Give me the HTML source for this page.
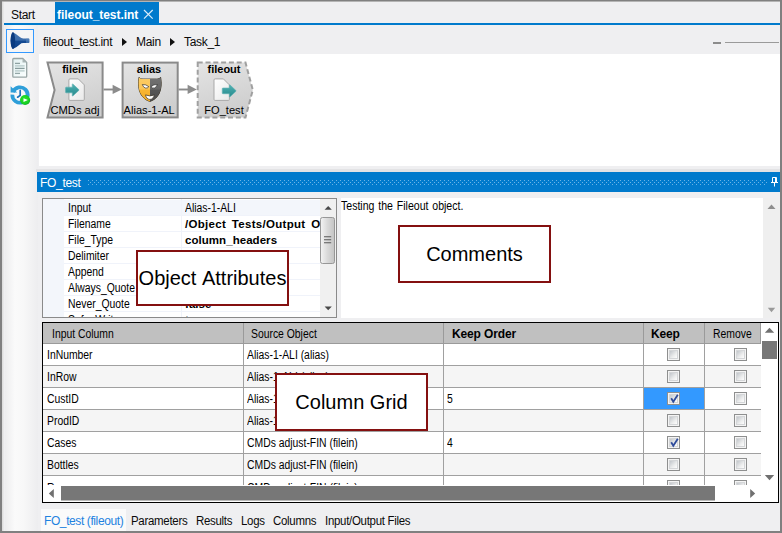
<!DOCTYPE html>
<html>
<head>
<meta charset="utf-8">
<title>fileout_test.int</title>
<style>
*{box-sizing:border-box;margin:0;padding:0}
html,body{width:782px;height:533px;overflow:hidden;background:#efeff1}
body{position:relative;font-family:"Liberation Sans",sans-serif;font-size:12px;color:#1a1a1a}
.abs{position:absolute}
.t{position:absolute;white-space:nowrap;line-height:1}
.ui{font-size:12px;letter-spacing:-0.3px;color:#0a0a0a}
.ms{font-size:12px;transform:scaleX(.865);transform-origin:0 0;color:#000}
.msb{font-size:11.5px;letter-spacing:0.05px;word-spacing:4px;color:#000;font-weight:bold}
#frame-top{left:0;top:0;width:782px;height:2px;background:linear-gradient(#808080 0,#808080 1px,#b4b4b4 1px,#b4b4b4 2px)}
#frame-left{left:0;top:0;width:2px;height:533px;background:#808080}
#frame-left2{left:2px;top:2px;width:2px;height:529px;background:linear-gradient(90deg,#d9d9d9,#ececec)}
#frame-right{left:780px;top:0;width:2px;height:533px;background:#808080}
#frame-bottom{left:0;top:531px;width:782px;height:2px;background:#808080}
#tabline{left:4px;top:23px;width:776px;height:2px;background:#007acc}
#tab-active{left:55px;top:2px;width:104px;height:22px;background:#007acc}
#canvas{left:39px;top:54px;width:741px;height:112px;background:#fff}
#strip{left:36px;top:169px;width:744px;height:3px;background:#e3e3e5}
#ptitle{left:37px;top:172px;width:743px;height:20px;background:#007acc}
#dots{left:88px;top:179px}
#props{left:42px;top:198px;width:295px;height:120px;background:#fff;border:1px solid #8a8a8a;overflow:hidden}
#comments{left:341px;top:198px;width:422px;height:120px;background:#fff}
#cscroll{left:763px;top:198px;width:17px;height:120px;background:#efefef}
#grid{left:42px;top:322px;width:737px;height:181px;background:#fff;border:1px solid #000;overflow:hidden}
.callout{position:absolute;border:2px solid #841010;background:#fff;font-size:20px;color:#000;text-align:center;white-space:nowrap;font-kerning:none}
.pr{position:absolute;left:21px;width:256px;height:16px;border-bottom:1px solid #f0f3fa}
.pr .t{top:2px}
.pr .msb{top:2.6px}
.gh{position:absolute;top:0;height:21px;background:#c0c0c0;border-right:1px solid #9a9a9a;border-bottom:1px solid #9a9a9a}
.gh .t{top:5px;word-spacing:0}
.gh .msb{font-size:12px;letter-spacing:-0.13px;word-spacing:0;top:5px}
.gr{position:absolute;left:0;width:718px;height:22px;border-bottom:1px solid #a0a0a0;background:#fff}
.gr.alt{background:#f5f5f5}
.gc{position:absolute;top:0;height:21px;border-right:1px solid #a0a0a0}
.gc .t{top:5px;left:4px}
.gr.last .gc .t{top:5.7px}
.cb{position:absolute;top:4px;width:13px;height:13px;border:1px solid #8e8f8f;background:#f4f4f4}
.cb i{position:absolute;left:1px;top:1px;width:9px;height:9px;border:1px solid #d4d6d8;background:linear-gradient(135deg,#c2c6cb,#eceded 60%,#fdfdfd)}
.cb svg{position:absolute;left:1px;top:0px}
</style>
</head>
<body>
<!-- tab strip -->
<div class="abs" id="tab-active"></div>
<div class="abs" id="tabline"></div>
<div class="t ui" id="tstart" style="left:11px;top:9px">Start</div>
<div class="t" id="tfile" style="left:57px;top:9px;font-size:12px;font-weight:bold;color:#fff;letter-spacing:-0.05px">fileout_test.int</div>
<svg class="abs" style="left:143px;top:9px" width="11" height="11" viewBox="0 0 11 11"><path d="M1 1 L9.700 9.700 M9.700 1 L1 9.700" stroke="#d9ecfa" stroke-width="1.200" fill="none"/></svg>

<!-- left toolbar -->
<div class="abs" id="tbcol" style="left:5px;top:25px;width:33px;height:506px;background:linear-gradient(90deg,#ededee 0,#fafafa 30%,#f8f8f8 55%,#ededef 100%)"></div>
<div class="abs" id="btn1" style="left:6px;top:29px;width:28px;height:24px;border:1px solid #3399ff;background:#f5f5f6"></div>
<svg class="abs" style="left:4px;top:26px" width="36" height="84" viewBox="4 26 36 84">
  <defs>
    <linearGradient id="hg" x1="0" y1="0" x2="0" y2="1"><stop offset="0" stop-color="#4877b3"/><stop offset="0.480" stop-color="#3b6cab"/><stop offset="0.520" stop-color="#154b93"/><stop offset="1" stop-color="#0f4189"/></linearGradient>
    <linearGradient id="pg" x1="0" y1="0" x2="1" y2="1"><stop offset="0" stop-color="#e3f1f1"/><stop offset="1" stop-color="#fbffff"/></linearGradient>
    <radialGradient id="gg" cx="0.450" cy="0.400" r="0.650"><stop offset="0" stop-color="#2be52b"/><stop offset="0.700" stop-color="#16d022"/><stop offset="1" stop-color="#0c9a2c"/></radialGradient>
  </defs>
  <!-- horn -->
  <path d="M12.800 32.300 Q16.800 34.200 19.800 37 Q21.200 38.400 23.200 38.400 L28.600 38.400 Q29.300 38.400 29.300 39.100 V42.300 Q29.300 43 28.600 43 L23.200 43 Q21.200 43 19.800 44.400 Q16.800 47.200 12.800 48.900 Q10.600 46 10.600 40.600 Q10.600 35.200 12.800 32.300 Z" fill="url(#hg)"/>
  <rect x="26" y="38.400" width="3.300" height="4.600" rx="0.700" fill="#5a88bf" opacity="0.550"/>
  <ellipse cx="12.900" cy="40.600" rx="2.300" ry="8.300" fill="#0b3b80"/>
  <!-- document -->
  <path d="M13.600 58.500 H22.800 L26.700 62.400 V76.300 Q26.700 77.200 25.800 77.200 H13.600 Q12.800 77.200 12.800 76.300 V59.400 Q12.800 58.500 13.600 58.500 Z" fill="url(#pg)" stroke="#98a5a5" stroke-width="1.300"/>
  <path d="M22.500 58.700 V62.600 H26.500 Z" fill="#aab6b6"/>
  <path d="M15 63.400 H20" stroke="#8ea2a2" stroke-width="1.300"/>
  <path d="M15 65.900 H24.600" stroke="#b4c8c8" stroke-width="1.300"/>
  <path d="M15 68.400 H24.600" stroke="#879c9c" stroke-width="1.300"/>
  <path d="M15 70.900 H24.600" stroke="#b4c8c8" stroke-width="1.300"/>
  <path d="M15 73.400 H20" stroke="#93a7a7" stroke-width="1.300"/>
  <!-- history / run -->
  <path d="M12.910 92 A7.700 7.700 0 1 1 12.320 94.600" fill="none" stroke="#2f9fd9" stroke-width="3.700"/>
  <path d="M10.600 86.200 L10.600 92.600 L17.200 92.600 Z" fill="#2f9fd9"/>
  <path d="M20.200 90.400 V95.400 L17.600 97.200" fill="none" stroke="#1b72ba" stroke-width="1.700" stroke-linecap="round" stroke-linejoin="round"/>
  <circle cx="25.100" cy="100" r="5.100" fill="url(#gg)"/>
  <path d="M23.500 98.200 L27.900 100.050 L23.500 101.900 Z" fill="#fff"/>
</svg>

<!-- breadcrumb -->
<div class="t ui" id="bc1" style="left:43px;top:36px">fileout_test.int</div>
<div class="abs" style="left:122px;top:38px;width:0;height:0;border-left:5px solid #111;border-top:4px solid transparent;border-bottom:4px solid transparent"></div>
<div class="t ui" id="bc2" style="left:136px;top:36px">Main</div>
<div class="abs" style="left:170px;top:38px;width:0;height:0;border-left:5px solid #111;border-top:4px solid transparent;border-bottom:4px solid transparent"></div>
<div class="t ui" id="bc3" style="left:184px;top:36px">Task_1</div>
<div class="abs" style="left:713px;top:42px;width:8px;height:2px;background:#8c8c8c"></div>
<div class="abs" style="left:725px;top:42px;width:54px;height:1px;background:#9a9a9a"></div>

<!-- canvas -->
<div class="abs" id="canvas"></div>
<div class="abs" id="strip"></div>
<svg class="abs" id="flow" style="left:39px;top:54px" width="240" height="70" viewBox="39 54 240 70">
  <defs>
    <linearGradient id="ng" x1="0" y1="0" x2="0.300" y2="1"><stop offset="0" stop-color="#e4e4e4"/><stop offset="1" stop-color="#cecece"/></linearGradient>
    <linearGradient id="ag" x1="0" y1="0" x2="0" y2="1"><stop offset="0" stop-color="#56b3b4"/><stop offset="0.500" stop-color="#3a9d9f"/><stop offset="1" stop-color="#2a8c8e"/></linearGradient>
    <linearGradient id="dg" x1="0" y1="0" x2="1" y2="1"><stop offset="0" stop-color="#ffffff"/><stop offset="1" stop-color="#e9e9e9"/></linearGradient>
  </defs>
  <path d="M47.500 62.600 H102.600 V117.400 H47.500 L54.600 89.900 Z" fill="url(#ng)" stroke="#8a8a8a" stroke-width="2" stroke-linejoin="miter"/>
  <rect x="122.600" y="62.600" width="55.100" height="54.800" fill="url(#ng)" stroke="#8a8a8a" stroke-width="2"/>
  <path d="M197.700 62.600 H245.500 L252.800 90 L245.500 117.400 H197.700 Z" fill="url(#ng)" stroke="#a0a0a0" stroke-width="2" stroke-dasharray="5 2.800"/>
  <path d="M103.500 89.500 H113.500" stroke="#8a8a8a" stroke-width="1.900"/>
  <path d="M112.600 84.700 L121.800 89.400 L112.600 94.100 Z" fill="#8c8c8c"/>
  <path d="M178.500 89.500 H188.500" stroke="#8a8a8a" stroke-width="1.900"/>
  <path d="M187.600 84.700 L196.800 89.400 L187.600 94.100 Z" fill="#8c8c8c"/>
  <!-- filein icon -->
  <path d="M70 78.900 H78.300 L84.300 84.900 V99.400 Q84.300 100.400 83.300 100.400 H70 Q68.900 100.400 68.900 99.400 V80 Q68.900 78.900 70 78.900 Z" fill="url(#dg)" stroke="#a9a9a9" stroke-width="1"/>
  <path d="M65.600 87.800 Q65.600 87.200 66.200 87.200 H72.300 V84.400 Q72.300 83.600 73 84.200 L78.800 89.600 Q79.200 90 78.800 90.400 L73 95.800 Q72.300 96.400 72.300 95.600 V92.800 H66.200 Q65.600 92.800 65.600 92.200 Z" fill="url(#ag)" stroke="#5fb0b2" stroke-width="0.700"/>
  <!-- alias mask -->
  <defs>
    <linearGradient id="mgold" x1="0" y1="0" x2="0" y2="1"><stop offset="0" stop-color="#fccb63"/><stop offset="0.480" stop-color="#fbc557"/><stop offset="0.540" stop-color="#f8b530"/><stop offset="1" stop-color="#f2ab25"/></linearGradient>
    <linearGradient id="mgray" x1="0" y1="0" x2="0" y2="1"><stop offset="0" stop-color="#737373"/><stop offset="0.480" stop-color="#666666"/><stop offset="0.540" stop-color="#555555"/><stop offset="1" stop-color="#4c4c4c"/></linearGradient>
    <clipPath id="mL"><rect x="137" y="76" width="12.900" height="27"/></clipPath>
    <clipPath id="mR"><rect x="149.900" y="76" width="13" height="27"/></clipPath>
  </defs>
  <path id="maskp" d="M139.100 77.300 C139.800 78.500 141 79.100 143 79.100 L156.700 79.100 C158.700 79.100 159.900 78.500 160.600 77.300 C161.700 83 161.300 89.600 158.900 94 C156.800 97.800 153.600 100.400 149.850 101.400 C146.100 100.400 142.900 97.800 140.800 94 C138.400 89.600 138 83 139.100 77.300 Z" fill="#3c3424" stroke="#3c3424" stroke-width="1"/>
  <path d="M139.100 77.300 C139.800 78.500 141 79.100 143 79.100 L156.700 79.100 C158.700 79.100 159.900 78.500 160.600 77.300 C161.700 83 161.300 89.600 158.900 94 C156.800 97.800 153.600 100.400 149.850 101.400 C146.100 100.400 142.900 97.800 140.800 94 C138.400 89.600 138 83 139.100 77.300 Z" fill="url(#mgold)" clip-path="url(#mL)"/>
  <path d="M139.100 77.300 C139.800 78.500 141 79.100 143 79.100 L156.700 79.100 C158.700 79.100 159.900 78.500 160.600 77.300 C161.700 83 161.300 89.600 158.900 94 C156.800 97.800 153.600 100.400 149.850 101.400 C146.100 100.400 142.900 97.800 140.800 94 C138.400 89.600 138 83 139.100 77.300 Z" fill="url(#mgray)" clip-path="url(#mR)"/>
  <path d="M142.300 84.500 Q146 84.200 148.800 86.700 Q147.400 88.600 145.200 88 Q143.200 87.200 142.300 84.500 Z" fill="#fff" stroke="#3a3226" stroke-width="0.700"/>
  <path d="M157.400 84.500 Q153.700 84.200 150.900 86.700 Q152.300 88.600 154.500 88 Q156.500 87.200 157.400 84.500 Z" fill="#fff" stroke="#2e2e2e" stroke-width="0.700"/>
  <path d="M145.500 94.900 Q149.900 97 154.300 94.900 Q153.400 99.200 149.900 99.400 Q146.400 99.200 145.500 94.900 Z" fill="#fff" stroke="#3a3226" stroke-width="0.700"/>
  <!-- fileout icon -->
  <path d="M215.100 78.900 H223.400 L229.400 84.900 V99.400 Q229.400 100.400 228.400 100.400 H215.100 Q214 100.400 214 99.400 V80 Q214 78.900 215.100 78.900 Z" fill="url(#dg)" stroke="#a9a9a9" stroke-width="1"/>
  <path d="M222.300 88.700 Q222.300 88.100 222.900 88.100 H229.400 V85.300 Q229.400 84.500 230.100 85.100 L235.900 90.500 Q236.300 90.900 235.900 91.300 L230.100 96.700 Q229.400 97.300 229.400 96.500 V93.700 H222.900 Q222.300 93.700 222.300 93.100 Z" fill="url(#ag)" stroke="#5fb0b2" stroke-width="0.700"/>
  <g font-family="Liberation Sans, sans-serif" font-size="11" fill="#000" text-anchor="middle">
    <text x="75" y="73" font-weight="bold">filein</text>
    <text x="75" y="114" font-size="11.200">CMDs adj</text>
    <text x="149" y="73" font-weight="bold">alias</text>
    <text x="149.200" y="114" font-size="11.100">Alias-1-AL</text>
    <text x="224" y="73" font-weight="bold">fileout</text>
    <text x="224" y="114" font-size="11.100">FO_test</text>
  </g>
</svg>

<!-- panel title -->
<div class="abs" id="ptitle"></div>
<div class="t ui" id="pt" style="left:40px;top:177px;color:#fff">FO_test</div>
<svg class="abs" id="dots" width="680" height="6">
  <defs><pattern id="dp" width="4" height="4" patternUnits="userSpaceOnUse"><rect x="0" y="1" width="1" height="1" fill="#6ab4e6"/><rect x="2" y="3" width="1" height="1" fill="#6ab4e6"/></pattern></defs>
  <rect x="0" y="0" width="680" height="6" fill="url(#dp)"/>
</svg>
<svg class="abs" style="left:770px;top:176px" width="10" height="11" viewBox="0 0 10 11"><path d="M2.500 1.500 H6.500 V6.500 H2.500 Z M5.500 1.500 V6.500 M1 6.500 H8 M4.500 6.500 V10.500" stroke="#fff" stroke-width="1" fill="none"/></svg>

<!-- comments -->
<div class="abs" id="comments"></div>
<div class="abs" id="cscroll"></div>
<svg class="abs" style="left:763px;top:198px" width="16" height="120" viewBox="0 0 16 120"><path d="M4.500 11 L8.500 6.500 L12.500 11 Z" fill="#8e8e8e"/><path d="M4.800 109.800 L8.500 114.200 L12.200 109.800 Z" fill="#999"/></svg>
<div class="t ms" id="ctext" style="left:341px;top:200px;transform:scaleX(.88);word-spacing:1px">Testing the Fileout object.</div>
<div class="abs" id="props">
<div class="abs" style="left:0;top:0;width:21px;height:118px;background:#f3f6fb"></div>
<div class="pr" style="top:1px;background:#f3f6fb"><div class="t ms" style="left:4px">Input</div><div class="t ms" style="left:121px">Alias-1-ALI</div></div>
<div class="pr" style="top:17px"><div class="t ms" style="left:4px">Filename</div><div class="t msb" style="left:121px;letter-spacing:0.3px;word-spacing:2.2px">/Object Tests/Output O</div></div>
<div class="pr" style="top:33px"><div class="t ms" style="left:4px">File_Type</div><div class="t msb" style="left:121px">column_headers</div></div>
<div class="pr" style="top:49px"><div class="t ms" style="left:4px">Delimiter</div><div class="t msb" style="left:121px">,</div></div>
<div class="pr" style="top:65px"><div class="t ms" style="left:4px">Append</div><div class="t ms" style="left:121px">false</div></div>
<div class="pr" style="top:81px"><div class="t ms" style="left:4px">Always_Quote</div><div class="t ms" style="left:121px">false</div></div>
<div class="pr" style="top:97px"><div class="t ms" style="left:4px">Never_Quote</div><div class="t msb" style="left:121px">false</div></div>
<div class="pr" style="top:113px"><div class="t ms" style="left:4px">Safe_Write</div><div class="t msb" style="left:121px">true</div></div>
<div class="abs" style="left:138px;top:0;width:1px;height:118px;background:#f0f3fa"></div>
<div class="abs" style="left:277px;top:0;width:17px;height:118px;background:#f0f0f0"></div>
<svg class="abs" style="left:277px;top:0" width="17" height="118" viewBox="0 0 17 118"><defs><linearGradient id="thg" x1="0" y1="0" x2="1" y2="0"><stop offset="0" stop-color="#f4f4f4"/><stop offset="0.5" stop-color="#d9d9d9"/><stop offset="1" stop-color="#c4c4c4"/></linearGradient></defs><path d="M4.600 10.800 L8.200 7 L11.800 10.800 Z" fill="#484848"/><rect x="0.500" y="18.500" width="14" height="46" rx="2" fill="url(#thg)" stroke="#979797"/><path d="M4 37.800 H11.200 M4 40.800 H11.200 M4 43.800 H11.200" stroke="#5a5a5a" stroke-width="1.100"/><path d="M4.600 107.500 L8.200 111.300 L11.800 107.500 Z" fill="#484848"/></svg>
</div>
<div class="abs" id="grid">
<div class="gh" style="left:0px;width:201px"><div class="t ms" style="left:9px">Input Column</div></div>
<div class="gh" style="left:201px;width:200px"><div class="t ms" style="left:7px">Source Object</div></div>
<div class="gh" style="left:401px;width:200px"><div class="t msb" style="left:8px">Keep Order</div></div>
<div class="gh" style="left:601px;width:61px"><div class="t msb" style="left:7px">Keep</div></div>
<div class="gh" style="left:662px;width:56px"><div class="t ms" style="left:7.5px">Remove</div></div>
<div class="gr" style="top:21px">
<div class="gc" style="left:0;width:201px"><div class="t ms">InNumber</div></div>
<div class="gc" style="left:201px;width:200px"><div class="t ms" style="left:2.5px">Alias-1-ALI (alias)</div></div>
<div class="gc" style="left:401px;width:200px"><div class="t ms" style="left:3px"></div></div>
<div class="gc" style="left:601px;width:61px"><div class="cb" style="left:23px"><i></i></div></div>
<div class="gc" style="left:662px;width:56px;border-right:none"><div class="cb" style="left:29px"><i></i></div></div>
</div>
<div class="gr alt" style="top:43px">
<div class="gc" style="left:0;width:201px"><div class="t ms">InRow</div></div>
<div class="gc" style="left:201px;width:200px"><div class="t ms" style="left:2.5px">Alias-1-ALI (alias)</div></div>
<div class="gc" style="left:401px;width:200px"><div class="t ms" style="left:3px"></div></div>
<div class="gc" style="left:601px;width:61px"><div class="cb" style="left:23px"><i></i></div></div>
<div class="gc" style="left:662px;width:56px;border-right:none"><div class="cb" style="left:29px"><i></i></div></div>
</div>
<div class="gr" style="top:65px">
<div class="gc" style="left:0;width:201px"><div class="t ms">CustID</div></div>
<div class="gc" style="left:201px;width:200px"><div class="t ms" style="left:2.5px">Alias-1-ALI (alias)</div></div>
<div class="gc" style="left:401px;width:200px"><div class="t ms" style="left:3px">5</div></div>
<div class="gc" style="left:601px;width:61px;background:#3399ff"><div class="cb" style="left:23px"><i></i><svg width="11" height="11" viewBox="0 0 11 11"><path d="M2.200 5.200 L4.300 8.800 L8.800 1.800" stroke="#2f4c9c" stroke-width="1.800" fill="none"/></svg></div></div>
<div class="gc" style="left:662px;width:56px;border-right:none"><div class="cb" style="left:29px"><i></i></div></div>
</div>
<div class="gr alt" style="top:87px">
<div class="gc" style="left:0;width:201px"><div class="t ms">ProdID</div></div>
<div class="gc" style="left:201px;width:200px"><div class="t ms" style="left:2.5px">Alias-1-ALI (alias)</div></div>
<div class="gc" style="left:401px;width:200px"><div class="t ms" style="left:3px"></div></div>
<div class="gc" style="left:601px;width:61px"><div class="cb" style="left:23px"><i></i></div></div>
<div class="gc" style="left:662px;width:56px;border-right:none"><div class="cb" style="left:29px"><i></i></div></div>
</div>
<div class="gr" style="top:109px">
<div class="gc" style="left:0;width:201px"><div class="t ms">Cases</div></div>
<div class="gc" style="left:201px;width:200px"><div class="t ms" style="left:2.5px">CMDs adjust-FIN (filein)</div></div>
<div class="gc" style="left:401px;width:200px"><div class="t ms" style="left:3px">4</div></div>
<div class="gc" style="left:601px;width:61px"><div class="cb" style="left:23px"><i></i><svg width="11" height="11" viewBox="0 0 11 11"><path d="M2.200 5.200 L4.300 8.800 L8.800 1.800" stroke="#2f4c9c" stroke-width="1.800" fill="none"/></svg></div></div>
<div class="gc" style="left:662px;width:56px;border-right:none"><div class="cb" style="left:29px"><i></i></div></div>
</div>
<div class="gr alt" style="top:131px">
<div class="gc" style="left:0;width:201px"><div class="t ms">Bottles</div></div>
<div class="gc" style="left:201px;width:200px"><div class="t ms" style="left:2.5px">CMDs adjust-FIN (filein)</div></div>
<div class="gc" style="left:401px;width:200px"><div class="t ms" style="left:3px"></div></div>
<div class="gc" style="left:601px;width:61px"><div class="cb" style="left:23px"><i></i></div></div>
<div class="gc" style="left:662px;width:56px;border-right:none"><div class="cb" style="left:29px"><i></i></div></div>
</div>
<div class="gr last" style="top:153px">
<div class="gc" style="left:0;width:201px"><div class="t ms">Revenue</div></div>
<div class="gc" style="left:201px;width:200px"><div class="t ms" style="left:2.5px">CMDs adjust-FIN (filein)</div></div>
<div class="gc" style="left:401px;width:200px"><div class="t ms" style="left:3px"></div></div>
<div class="gc" style="left:601px;width:61px"><div class="cb" style="left:23px"><i></i></div></div>
<div class="gc" style="left:662px;width:56px;border-right:none"><div class="cb" style="left:29px"><i></i></div></div>
</div>
<div class="abs" style="left:718px;top:0;width:17px;height:162px;background:#fff"></div>
<svg class="abs" style="left:718px;top:0" width="17" height="162" viewBox="0 0 17 162"><path d="M3.800 9.800 L8.500 4.800 L13.200 9.800 Z" fill="#707070"/><rect x="1" y="18" width="15" height="18" fill="#777"/><path d="M3.800 152 L8.500 157.200 L13.200 152 Z" fill="#707070"/></svg>
<div class="abs" style="left:0;top:162px;width:735px;height:17px;background:#fff"></div>
<svg class="abs" style="left:0;top:163px" width="735" height="16" viewBox="0 0 735 16"><path d="M10.800 3 L5.800 7.500 L10.800 12 Z" fill="#707070"/><rect x="18" y="0" width="654" height="14.500" fill="#777"/><path d="M707.200 3 L712.200 7.500 L707.200 12 Z" fill="#707070"/></svg>
</div>
<!-- callouts -->
<div class="callout" id="co1" style="left:136px;top:250px;width:153px;height:56px;line-height:53px">Object Attributes</div>
<div class="callout" id="co2" style="left:398px;top:225px;width:153px;height:58px;line-height:55px">Comments</div>
<div class="callout" id="co3" style="left:275px;top:373px;width:153px;height:58px;line-height:54px">Column Grid</div>

<!-- bottom tabs -->
<div class="abs" style="left:41px;top:509px;width:85px;height:22px;background:#fafafa"></div>
<div class="t ui" id="bt1" style="left:44px;top:515px;color:#1e82e0;letter-spacing:-0.4px">FO_test (fileout)</div>
<div class="t ui" id="bt2" style="transform:scaleX(.955);transform-origin:0 0;left:131px;top:515px">Parameters</div>
<div class="t ui" id="bt3" style="transform:scaleX(.955);transform-origin:0 0;left:196px;top:515px">Results</div>
<div class="t ui" id="bt4" style="transform:scaleX(.955);transform-origin:0 0;left:241px;top:515px">Logs</div>
<div class="t ui" id="bt5" style="transform:scaleX(.955);transform-origin:0 0;left:273px;top:515px">Columns</div>
<div class="t ui" id="bt6" style="transform:scaleX(.955);transform-origin:0 0;left:325px;top:515px">Input/Output Files</div>

<!-- frame -->
<div class="abs" id="frame-left2"></div>
<div class="abs" id="frame-top"></div>
<div class="abs" id="frame-left"></div>
<div class="abs" id="frame-right"></div>
<div class="abs" id="frame-bottom"></div>

</body>
</html>
